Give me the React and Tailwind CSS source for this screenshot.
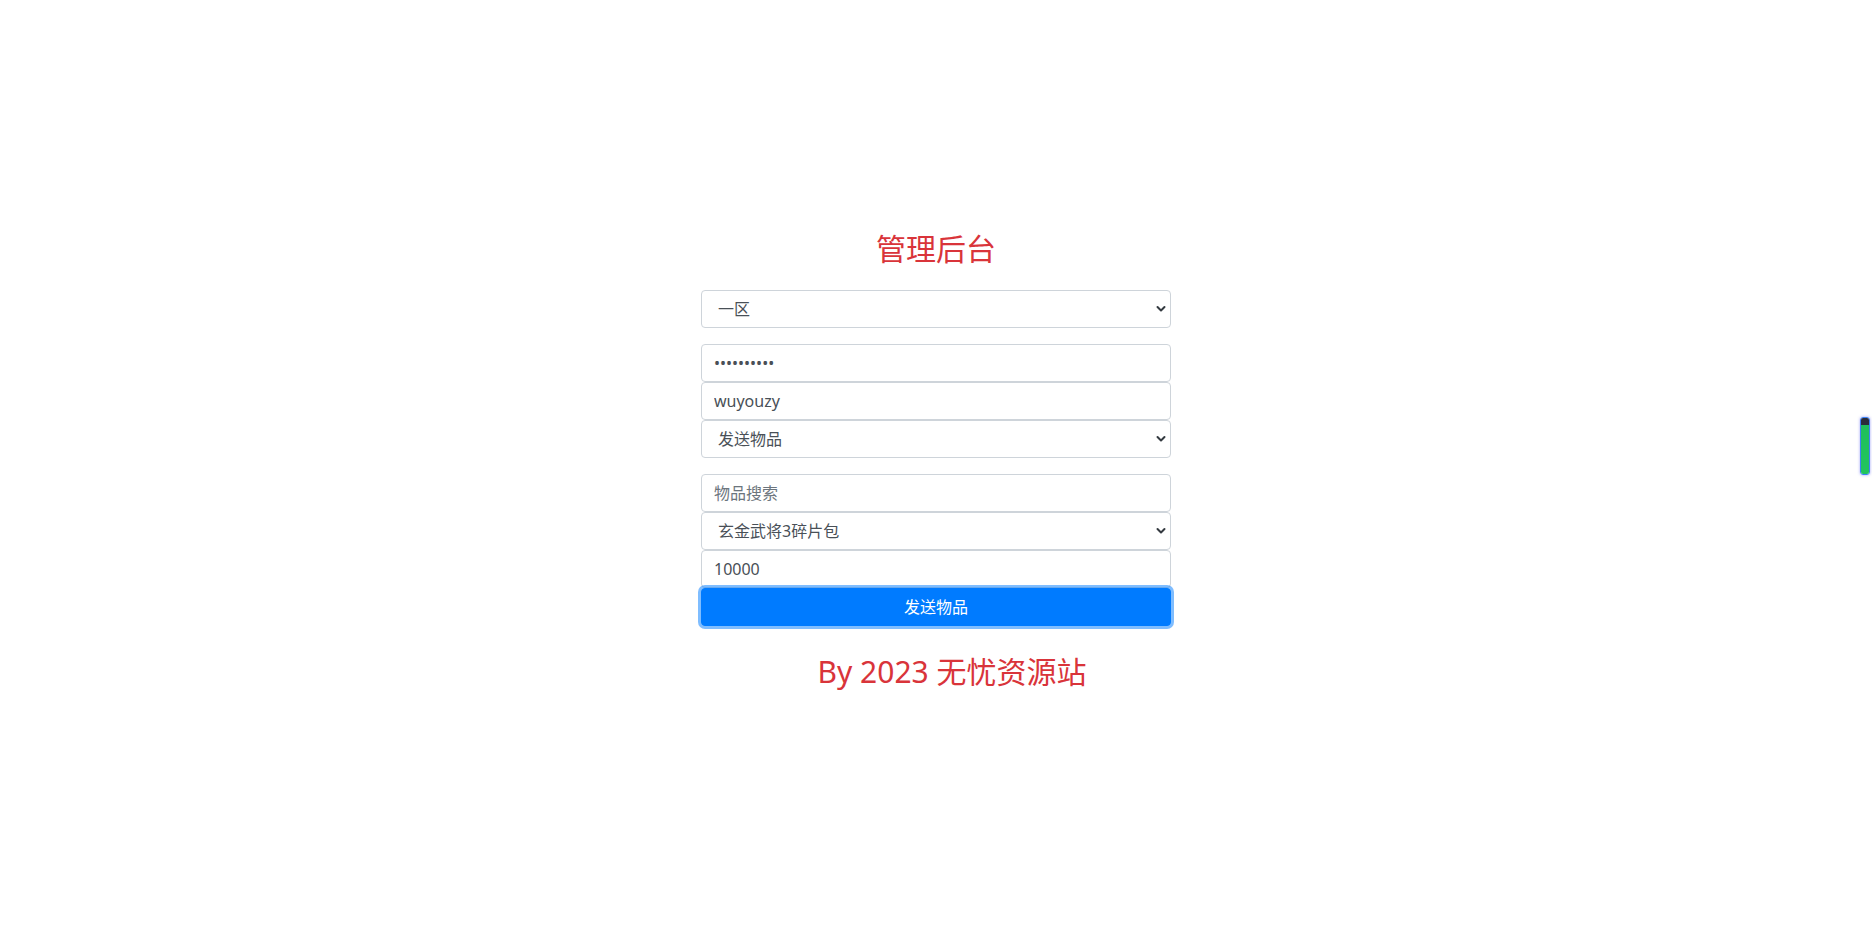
import React from "react";

function Chevron() {
  return (
    <svg
      className="pointer-events-none absolute right-[5px] top-1/2 -translate-y-1/2"
      width="10"
      height="7"
      viewBox="0 0 10 7"
      fill="none"
    >
      <path d="M1.5 1.5 L5 5 L8.5 1.5" stroke="#343a40" strokeWidth="2" strokeLinecap="round" strokeLinejoin="round" />
    </svg>
  );
}

function Select({ value, options }) {
  return (
    <div className="relative h-[38px] w-full">
      <select
        defaultValue={value}
        className="block h-[38px] w-full appearance-none rounded-[4px] border border-[#ced4da] bg-white pl-[16px] pr-[24px] text-[16px] leading-[36px] text-[#495057] outline-none"
      >
        {options.map((o) => (
          <option key={o} value={o}>
            {o}
          </option>
        ))}
      </select>
      <Chevron />
    </div>
  );
}

function Input(props) {
  return (
    <input
      {...props}
      className="block h-[38px] w-full rounded-[4px] border border-[#ced4da] bg-white px-[12px] text-[16px] text-[#495057] outline-none placeholder:text-[#6c757d]"
    />
  );
}

export default function App() {
  return (
    <div
      className="relative min-h-[947px] w-full bg-white"
      style={{ fontFamily: '"Noto Sans", "Noto Sans CJK SC", sans-serif' }}
    >
      <div className="flex flex-col items-center pt-[231px]">
        <h2 className="text-[30px] leading-[36px] text-[#d9343a]">管理后台</h2>
        <div className="mt-[23px] flex w-[470px] flex-col">
          <Select value="一区" options={["一区", "二区", "三区"]} />
          <div className="mt-[16px] flex flex-col">
            <Input type="password" defaultValue="1234567890" />
            <Input type="text" defaultValue="wuyouzy" />
            <Select value="发送物品" options={["发送物品", "发送邮件"]} />
          </div>
          <div className="mt-[16px] flex flex-col">
            <Input type="text" placeholder="物品搜索" />
            <Select value="玄金武将3碎片包" options={["玄金武将3碎片包"]} />
            <Input type="text" defaultValue="10000" />
            <button className="relative z-10 h-[38px] w-full rounded-[4px] border border-[#007bff] bg-[#007bff] text-[16px] text-white shadow-[0_0_0_3px_rgba(0,123,255,0.5)]">
              发送物品
            </button>
          </div>
        </div>
        <div className="mt-[28px] pl-[32px] text-[30px] leading-[36px] text-[#d9343a]">By 2023 无忧资源站</div>
      </div>

      <div className="fixed right-[2px] top-[417px] flex h-[58px] w-[10px] flex-col overflow-hidden rounded-[3px] border border-[#3b82f6] shadow-[0_0_3px_rgba(99,102,241,0.6)]">
        <div className="h-[7px] bg-[#2b2d3b]" />
        <div className="flex-1 bg-gradient-to-b from-[#1fbf5b] to-[#22c55e]" />
      </div>
    </div>
  );
}
